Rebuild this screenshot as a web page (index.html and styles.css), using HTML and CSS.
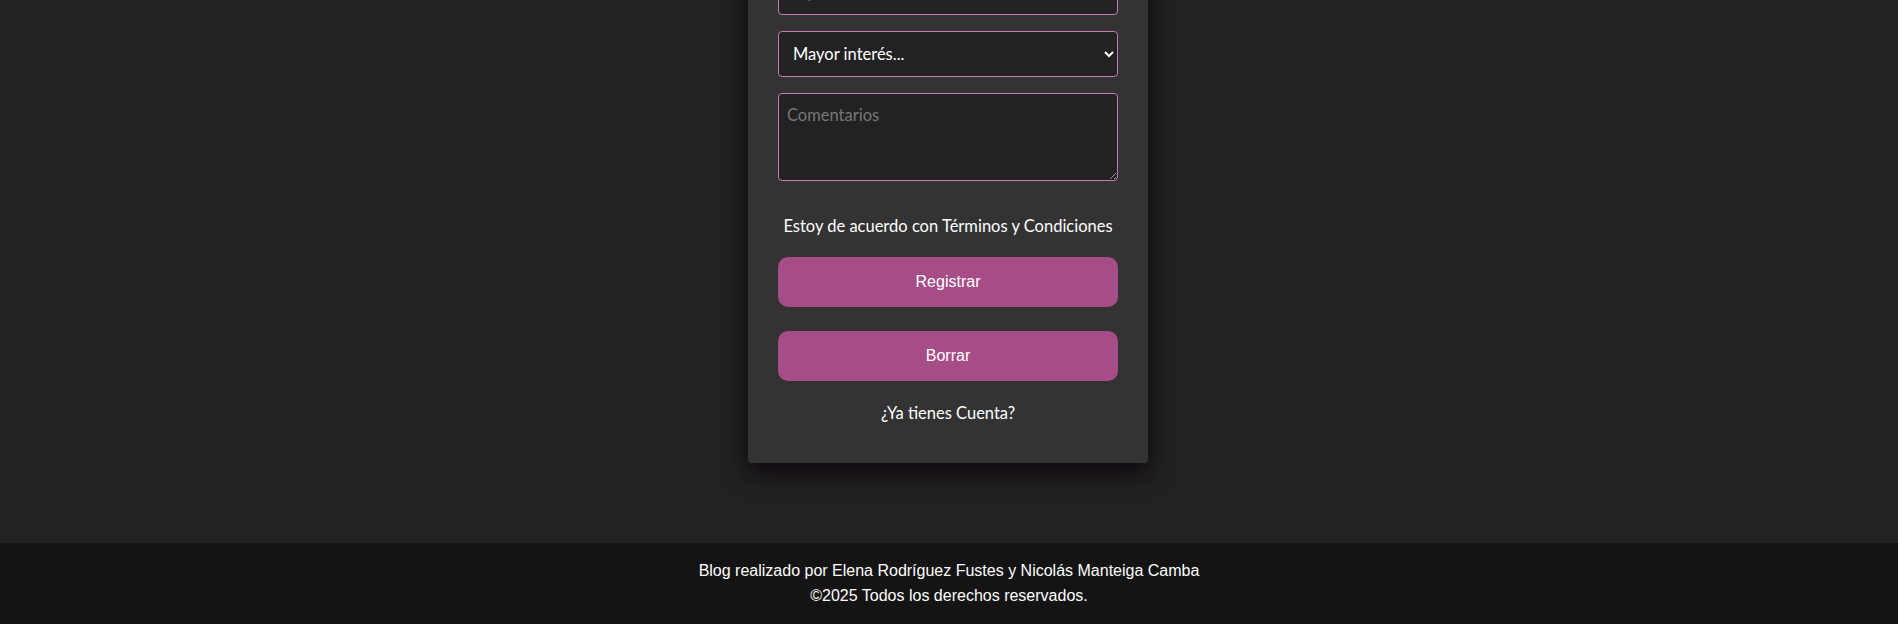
FILE: index.html
```html
<!DOCTYPE html>
<html lang="es">
<head>
<meta charset="utf-8">
<title>Registro</title>
<link rel="stylesheet" href="styles.css">
</head>
<body>
<main class="main">
  <form class="card">
    <input class="field" type="password" placeholder="Repetir contraseña">
    <select class="field select">
      <option>Mayor interés...</option>
    </select>
    <textarea class="field textarea" placeholder="Comentarios"></textarea>
    <label class="terms">Estoy de acuerdo con Términos y Condiciones</label>
    <button type="button" class="btn">Registrar</button>
    <button type="button" class="btn">Borrar</button>
    <a class="login">¿Ya tienes Cuenta?</a>
  </form>
</main>
<footer class="footer">
  <p>Blog realizado por Elena Rodríguez Fustes y Nicolás Manteiga Camba</p>
  <p>©2025 Todos los derechos reservados.</p>
</footer>
</body>
</html>
```
FILE: styles.css
```css
* { box-sizing: border-box; }
html, body { margin: 0; padding: 0; }
body {
  background: #222222;
  color: #fff;
  font-family: "Liberation Sans", Arial, sans-serif;
  overflow: hidden;
}
.main {
  height: 543px;
  display: flex;
  justify-content: center;
  align-items: flex-start;
  padding-right: 2px;
}
.card {
  width: 400px;
  margin-top: -31px;
  background: #333333;
  border-radius: 0 0 4px 4px;
  padding: 0 30px 40px;
  display: flex;
  flex-direction: column;
  box-shadow: 0 10px 24px rgba(12, 4, 12, 0.95);
}
.field {
  width: 340px;
  background: #222222;
  border: 1px solid #c47ab6;
  border-radius: 4px;
  color: #fff;
  font-family: Lato, "Open Sans", sans-serif;
  font-size: 16.5px;
  margin-bottom: 16px;
}
input.field { height: 46px; padding: 0 10px; }
.select {
  height: 46px;
  padding: 0 8px 0 10px;
  color-scheme: dark;
}
.textarea {
  height: 88px;
  padding: 11px 8px 9px;
  resize: vertical;
  margin-bottom: 35px;
  display: block;
}
.textarea::placeholder { color: #777; }
.terms {
  text-align: center;
  font-family: Lato, "Open Sans", sans-serif;
  font-size: 16.5px;
  line-height: 20px;
  margin-bottom: 21px;
}
.btn {
  height: 50px;
  border: none;
  border-radius: 10px;
  background: #a64d87;
  color: #fff;
  font-family: "Liberation Sans", Arial, sans-serif;
  font-size: 16px;
  margin-bottom: 24px;
}
.btn + .btn { margin-bottom: 22px; }
.login {
  text-align: center;
  font-family: Lato, "Open Sans", sans-serif;
  font-size: 16.5px;
  line-height: 20px;
  color: #fff;
}
.footer {
  height: 81px;
  background: #141414;
  text-align: center;
  padding-top: 15px;
  font-size: 16px;
  line-height: 25px;
}
.footer p { margin: 0; }
```
